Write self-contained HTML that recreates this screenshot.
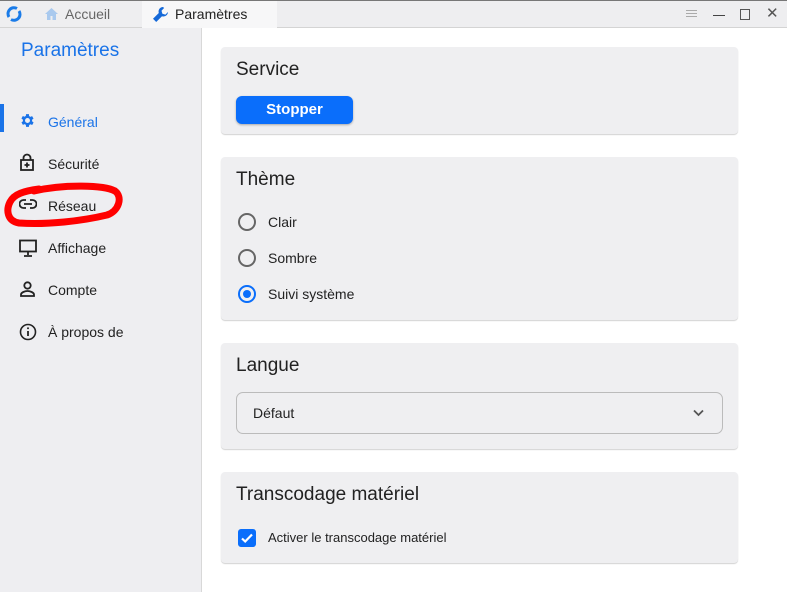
<!DOCTYPE html>
<html><head><meta charset="utf-8"><style>
*{box-sizing:border-box;margin:0;padding:0}
body{width:787px;height:592px;overflow:hidden;font-family:"Liberation Sans",sans-serif;background:#fff;position:relative;color:#222}
.top{position:absolute;left:0;top:0;width:787px;height:28px;background:#eeeef0;border-top:1px solid #777;border-bottom:1px solid #d4d4d4}
.tab2{position:absolute;left:142px;top:0;width:135px;height:27px;background:#f7f7f8}
.t{position:absolute;font-size:14px}
.side{position:absolute;left:0;top:28px;width:202px;height:564px;background:#eeeef1;border-right:1px solid #d8d8d8}
.nav{position:absolute;left:48px;font-size:14px;color:#222}
.ic{position:absolute;left:19px}
.card{position:absolute;left:221px;width:517px;background:#efeff1;border-radius:4px;box-shadow:0 1px 1px rgba(0,0,0,.18)}
.h{position:absolute;left:15px;font-size:19px;color:#222}
.radio{position:absolute;left:17px;width:18px;height:18px;border:2px solid #666;border-radius:50%}
.lbl{position:absolute;left:47px;font-size:14px;color:#222}
</style></head><body>
<div class="top"><div class="tab2"></div>
<svg style="position:absolute;left:6px;top:5px" width="16" height="16" viewBox="0 0 16 16"><path d="M3 11A6 6 0 0 1 11 2.5M13 5A6 6 0 0 1 5 13.5" stroke="#1a7be8" stroke-width="3" fill="none"/></svg>
<svg style="position:absolute;left:44px;top:6px" width="15" height="14" viewBox="0 0 15 14"><path d="M7.5 1L1 7h2v6h3.5V9h2v4H12V7h2z" fill="#a9c9ee"/></svg>
<div class="t" style="left:65px;top:5px;color:#666">Accueil</div>
<svg style="position:absolute;left:152px;top:5px" width="17" height="17" viewBox="0 0 17 17"><path d="M11 1a4.5 4.5 0 0 0-4.2 6L1 12.8 4.2 16 10 10.2A4.5 4.5 0 0 0 16 6l-2.6 2.6-3-.9-.9-3L12.1 2A4.5 4.5 0 0 0 11 1z" fill="#1569d8"/></svg>
<div class="t" style="left:175px;top:5px;color:#222">Paramètres</div>
<div style="position:absolute;left:686px;top:9px;width:11px;height:1px;background:#aaa;box-shadow:0 3px 0 #aaa,0 6px 0 #aaa"></div>
<div style="position:absolute;left:713px;top:14px;width:12px;height:1px;background:#444"></div>
<div style="position:absolute;left:740px;top:8px;width:10px;height:11px;border:1px solid #555"></div>
<div style="position:absolute;left:766px;top:3px;font-size:15px;color:#555">✕</div>
</div>
<div class="side">
<div style="position:absolute;left:21px;top:12px;font-size:19px;color:#1a73e8">Paramètres</div>
<div style="position:absolute;left:0;top:76px;width:4px;height:28px;background:#1a73e8"></div>
<svg class="ic" style="top:84px" width="17" height="17" viewBox="0 0 24 24"><path fill="#1a73e8" d="M19.4 13a7.5 7.5 0 0 0 0-2l2.1-1.6-2-3.5-2.5 1a7 7 0 0 0-1.7-1L15 3h-4l-.4 2.7a7 7 0 0 0-1.700 1l-2.5-1-2 3.5L6.600 11a7.5 7.5 0 0 0 0 2l-2.100 1.600 2 3.5 2.5-1a7 7 0 0 0 1.700 1L11 21h4l.4-2.700a7 7 0 0 0 1.700-1l2.5 1 2-3.5zM13 15.5a3.5 3.5 0 1 1 0-7 3.5 3.5 0 0 1 0 7z" transform="translate(-1 0)"/></svg>
<div class="nav" style="top:86px;color:#1a73e8">Général</div>
<svg class="ic" style="top:125px" width="16" height="18" viewBox="0 0 16 18"><rect x="2" y="7" width="12" height="10" fill="none" stroke="#222" stroke-width="1.8"/><path d="M4.5 7V5a3.5 3.5 0 0 1 7 0v2M8 9.5v5M5.5 12h5" stroke="#222" stroke-width="1.8" fill="none"/></svg>
<div class="nav" style="top:128px">Sécurité</div>
<svg class="ic" style="top:171px" width="18" height="10" viewBox="0 0 18 10"><path d="M7 1H4.5a4 4 0 0 0 0 8H7M11 1h2.5a4 4 0 0 1 0 8H11M5 5h8" stroke="#222" stroke-width="1.8" fill="none"/></svg>
<div class="nav" style="top:170px">Réseau</div>
<svg style="position:absolute;left:4px;top:152px" width="120" height="50" viewBox="0 0 120 50"><path d="M30 11C60 4 100 5 111 11c8 6 4 20-8 24-25 6-60 10-88 8C3 41 2 30 6 22 10 14 20 11 35 9" stroke="#f00" stroke-width="7" fill="none" stroke-linecap="round"/></svg>
<svg class="ic" style="top:211px" width="18" height="18" viewBox="0 0 18 18"><rect x="1" y="1.5" width="16" height="11" fill="none" stroke="#222" stroke-width="1.8"/><path d="M9 13v3M5 17h8" stroke="#222" stroke-width="1.8"/></svg>
<div class="nav" style="top:212px">Affichage</div>
<svg class="ic" style="top:253px;left:20px" width="15" height="16" viewBox="0 0 15 16"><circle cx="7.5" cy="4.5" r="3.2" fill="none" stroke="#222" stroke-width="1.8"/><path d="M1 15v-1.5c0-2 4-3.5 6.5-3.5s6.5 1.5 6.5 3.5V15z" fill="none" stroke="#222" stroke-width="1.8"/></svg>
<div class="nav" style="top:254px">Compte</div>
<svg class="ic" style="top:295px" width="18" height="18" viewBox="0 0 18 18"><circle cx="9" cy="9" r="7.5" fill="none" stroke="#222" stroke-width="1.6"/><path d="M9 8v5" stroke="#222" stroke-width="1.8"/><circle cx="9" cy="5.3" r="1" fill="#222"/></svg>
<div class="nav" style="top:296px">À propos de</div>
</div>
<div class="card" style="top:47px;height:87px">
<div class="h" style="top:12px">Service</div>
<div style="position:absolute;left:15px;top:49px;width:117px;height:28px;background:#0a6efb;border-radius:6px;color:#fff;font-weight:bold;font-size:15px;text-align:center;line-height:28px;box-shadow:0 1px 2px rgba(0,0,0,.3)">Stopper</div>
</div>
<div class="card" style="top:157px;height:163px">
<div class="h" style="top:12px">Thème</div>
<div class="radio" style="top:56px"></div><div class="lbl" style="top:57px">Clair</div>
<div class="radio" style="top:92px"></div><div class="lbl" style="top:93px">Sombre</div>
<div class="radio" style="top:128px;border-color:#0a6efb"><div style="position:absolute;left:3px;top:3px;width:8px;height:8px;border-radius:50%;background:#0a6efb"></div></div><div class="lbl" style="top:129px">Suivi système</div>
</div>
<div class="card" style="top:343px;height:106px">
<div class="h" style="top:12px">Langue</div>
<div style="position:absolute;left:15px;top:49px;width:487px;height:42px;border:1px solid #bbb;border-radius:7px"><div style="position:absolute;left:16px;top:12px;font-size:14px">Défaut</div>
<svg style="position:absolute;right:18px;top:16px" width="11" height="8" viewBox="0 0 11 8"><path d="M1 1.5l4.5 4.5 4.5-4.5" stroke="#555" stroke-width="1.8" fill="none"/></svg></div>
</div>
<div class="card" style="top:472px;height:91px">
<div class="h" style="top:12px">Transcodage matériel</div>
<div style="position:absolute;left:17px;top:57px;width:18px;height:18px;background:#0a6efb;border-radius:3px"><svg width="18" height="18" viewBox="0 0 18 18"><path d="M4 9.5l3.2 3L14 5.5" stroke="#fff" stroke-width="2.2" fill="none"/></svg></div>
<div class="lbl" style="top:58px;font-size:13px">Activer le transcodage matériel</div>
</div>
</body></html>
